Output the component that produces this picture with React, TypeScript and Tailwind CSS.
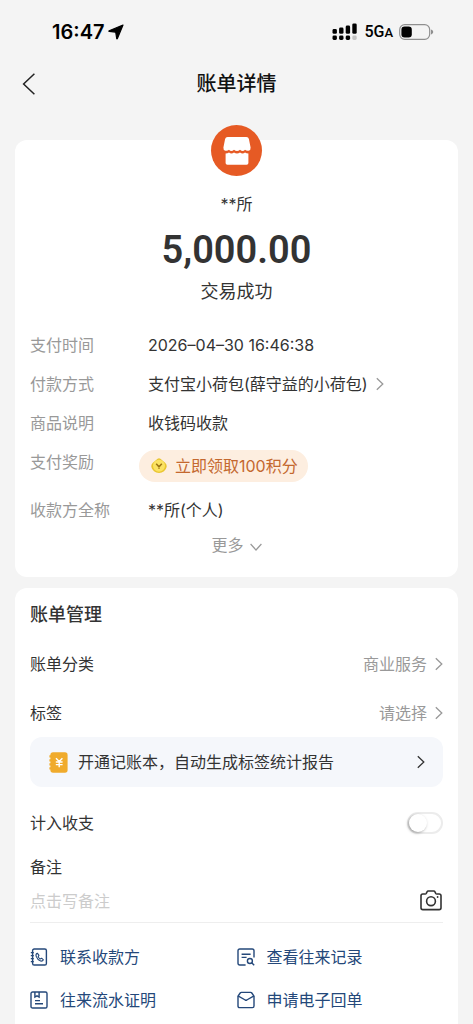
import { useState } from 'react';
import clsx from 'clsx';

interface IconProps {
  className?: string;
}

function ChevronRight({ className }: IconProps) {
  return (
    <svg viewBox="0 0 8 14" fill="none" stroke="currentColor" className={clsx('h-3.5 w-2 shrink-0', className)} aria-hidden="true">
      <path d="M0.8 1.2L6.8 7L0.8 12.8" strokeWidth="1.3" />
    </svg>
  );
}

function SignalIcon() {
  return (
    <svg viewBox="0 0 26 18" fill="currentColor" className="h-[18px] w-[26px]" aria-hidden="true">
      <rect x="0.5" y="6" width="4.4" height="4.8" rx="1.4" />
      <rect x="7.1" y="4.5" width="4.4" height="6.3" rx="1.4" />
      <rect x="13.7" y="2.6" width="4.4" height="8.2" rx="1.4" />
      <rect x="20.3" y="0.4" width="4.4" height="10.4" rx="1.4" />
      <rect x="0.5" y="12.6" width="4.4" height="4.4" rx="1.4" />
      <rect x="7.1" y="12.6" width="4.4" height="4.4" rx="1.4" />
      <rect x="13.7" y="12.6" width="4.4" height="4.4" rx="1.4" />
      <rect x="20.3" y="12.6" width="4.4" height="4.4" rx="1.4" opacity="0.2" />
    </svg>
  );
}

function BatteryIcon() {
  return (
    <svg viewBox="0 0 35 16" className="h-4 w-[35px]" aria-hidden="true">
      <rect x="0.7" y="0.7" width="30" height="14.6" rx="5" fill="none" stroke="#8f8f8f" strokeWidth="1.2" />
      <rect x="2.4" y="2.6" width="10.4" height="10.8" rx="3.2" fill="#000" />
      <path d="M32 5.6C33.6 6.2 34.2 7 34.2 8S33.6 9.8 32 10.4Z" fill="#8f8f8f" />
    </svg>
  );
}

function LocationIcon() {
  return (
    <svg viewBox="0 0 16 16" fill="currentColor" stroke="currentColor" strokeWidth="1.2" strokeLinejoin="round" className="size-4" aria-hidden="true">
      <path d="M15 1L9.4 14.6Q9 15.4 8.7 14.5L7.8 8.6Q7.7 8.2 7.3 8.1L1.3 7.4Q0.4 7.1 1.2 6.7Z" />
    </svg>
  );
}

function ShopIcon() {
  return (
    <svg viewBox="0 0 28 28" className="size-7" fill="#fff" aria-hidden="true">
      <path d="M4.6 0H23.4Q25.4 0 25.9 2L27.6 10.5Q27.9 13.2 25.6 13.7Q23.4 14 22 12.8Q19.8 15.2 17 12.8Q14 15.2 11 12.8Q8.2 15.2 6 12.8Q4.6 14 2.4 13.7Q0.1 13.2 0.4 10.5L2.1 2Q2.6 0 4.6 0Z" />
      <path d="M2.6 16.4Q4.6 16.4 6 15.4Q8.4 17.6 11 15.4Q14 17.6 17 15.4Q19.6 17.6 22 15.4Q23.4 16.4 25.4 16.4V26Q25.4 27.8 23.6 27.8H4.4Q2.6 27.8 2.6 26Z" />
    </svg>
  );
}

function CoinIcon() {
  return (
    <svg viewBox="0 0 16 16" className="size-4" aria-hidden="true">
      <path d="M6.6 0.8Q8 -0.2 9.4 0.8L14.4 5Q16 6.6 15.6 9A7.7 7 0 0 1 0.4 9Q0 6.6 1.6 5Z" fill="#e9c52f" />
      <circle cx="8" cy="7.8" r="6" fill="#fbe262" />
      <path d="M5.2 5.8L8 8.8L10.8 5.8M8 8.4V10.8" fill="none" stroke="#9c7412" strokeWidth="1.5" />
    </svg>
  );
}

function LedgerIcon() {
  return (
    <svg viewBox="0 0 19 21" className="h-[21px] w-[19px]" aria-hidden="true">
      <rect x="1.4" y="0.3" width="17.2" height="20.4" rx="2.6" fill="#f0ab2c" />
      <path d="M0.4 4.4h3M0.4 8.4h3M0.4 12.4h3M0.4 16.4h3" stroke="#f0ab2c" strokeWidth="2.4" />
      <path d="M7 6.2L10.2 9.6L13.4 6.2M10.2 9.6V15.2M6.8 10h6.8M6.8 12.6h6.8" fill="none" stroke="#fff" strokeWidth="1.4" />
    </svg>
  );
}

function CameraIcon() {
  return (
    <svg viewBox="0 0 22 21" fill="none" stroke="currentColor" strokeWidth="1.6" className="h-[21px] w-[22px]" aria-hidden="true">
      <path d="M2.8 4H5.2Q5.9 4 6.3 3.3L7 1.9Q7.4 1 8.3 1H13.7Q14.6 1 15 1.9L15.7 3.3Q16.1 4 16.8 4H19.2Q21 4 21 5.8V17.8Q21 19.6 19.2 19.6H2.8Q1 19.6 1 17.8V5.8Q1 4 2.8 4Z" />
      <circle cx="11" cy="11.2" r="4.4" />
      <circle cx="17.6" cy="7" r="0.9" fill="currentColor" stroke="none" />
    </svg>
  );
}

function ContactIcon() {
  return (
    <svg viewBox="0 0 18 18" fill="none" stroke="currentColor" strokeWidth="1.4" className="size-[18px]" aria-hidden="true">
      <rect x="2.6" y="1" width="13.8" height="16" rx="1.6" />
      <path d="M0.8 4.6h3M0.8 7.6h3M0.8 10.6h3M0.8 13.6h3" strokeWidth="1.2" />
      <path d="M7.3 5.2Q5.4 6 6.2 8.4Q7.4 11.8 10.6 13Q12.6 13.4 13.4 11.8L11.6 10.2L10.2 10.9Q8.8 10.2 8.2 8.6L9 7.3Z" strokeWidth="1.1" strokeLinejoin="round" />
    </svg>
  );
}

function RecordIcon() {
  return (
    <svg viewBox="0 0 18 18" fill="none" stroke="currentColor" strokeWidth="1.4" className="size-[18px]" aria-hidden="true">
      <path d="M8.6 17H2.8Q1 17 1 15.2V2.8Q1 1 2.8 1H15.2Q17 1 17 2.8V9.4" />
      <path d="M4.6 6.2h9M4.6 9.4h5" />
      <circle cx="12.9" cy="13" r="2.5" />
      <path d="M14.7 14.8L17.2 17.2" />
    </svg>
  );
}

function StatementIcon() {
  return (
    <svg viewBox="0 0 18 18" fill="none" stroke="currentColor" strokeWidth="1.4" className="size-[18px]" aria-hidden="true">
      <rect x="1" y="1" width="16" height="16" rx="1.6" />
      <path d="M4.9 1V6L7 4.8L9.1 6V1" />
      <path d="M5 9.6h5M5 12.8h8" />
    </svg>
  );
}

function ReceiptIcon() {
  return (
    <svg viewBox="0 0 18 18" fill="none" stroke="currentColor" strokeWidth="1.4" className="size-[18px]" aria-hidden="true">
      <path d="M1 5.2L3.2 2Q3.6 1.4 4.4 1.4H13.6Q14.4 1.4 14.8 2L17 5.2V15Q17 16.6 15.4 16.6H2.6Q1 16.6 1 15Z" />
      <path d="M1 4.8L8.2 9Q9 9.4 9.8 9L17 4.8" />
    </svg>
  );
}

const LINKS = [
  { label: '联系收款方', Icon: ContactIcon },
  { label: '查看往来记录', Icon: RecordIcon },
  { label: '往来流水证明', Icon: StatementIcon },
  { label: '申请电子回单', Icon: ReceiptIcon },
];

const SETTINGS = [
  { label: '账单分类', value: '商业服务' },
  { label: '标签', value: '请选择' },
];

interface DetailRowProps {
  label: string;
  children: React.ReactNode;
}

function DetailRow({ label, children }: DetailRowProps) {
  return (
    <div className="flex h-[39px] items-center">
      <dt className="w-[118px] shrink-0 text-[#999]">{label}</dt>
      <dd>{children}</dd>
    </div>
  );
}

function StatusBar() {
  return (
    <div className="flex h-16 items-center justify-between pr-[39px] pl-[52px] text-black">
      <div className="flex items-center gap-1">
        <span className="text-xl font-semibold">16:47</span>
        <LocationIcon />
      </div>
      <div className="flex items-center gap-1.5">
        <SignalIcon />
        <span className="font-[Roboto] text-base font-medium">
          5G<span className="text-[13px]">A</span>
        </span>
        <BatteryIcon />
      </div>
    </div>
  );
}

export default function App() {
  const [counted, setCounted] = useState(false);
  const [note, setNote] = useState('');

  return (
    <div className="flex min-h-screen flex-col bg-[#f4f4f4] font-[Inter,'Noto_Sans_CJK_SC',sans-serif] text-base leading-6 text-[#333]">
      <StatusBar />

      <header className="grid h-10 grid-cols-3 items-center px-[22px]">
        <button type="button" aria-label="返回" className="w-6">
          <svg viewBox="0 0 14 22" fill="none" stroke="#222" strokeWidth="1.5" className="h-[22px] w-3.5" aria-hidden="true">
            <path d="M12.4 0.8L1.6 11L12.4 21.2" />
          </svg>
        </button>
        <h1 className="text-center text-xl font-medium text-[#111]">账单详情</h1>
      </header>

      <main className="mt-9 flex flex-1 flex-col gap-[11px] px-[15px]">
        <section className="rounded-xl bg-white px-[15px] pb-4">
          <div className="flex flex-col items-center">
            <div className="-mt-[15px] flex size-[51px] items-center justify-center rounded-full bg-[#e65a24]">
              <ShopIcon />
            </div>
            <p className="mt-4">**所</p>
            <p className="mt-3 font-[Roboto] text-[38px] leading-[44px] font-semibold">5,000.00</p>
            <p className="mt-2 text-lg leading-6">交易成功</p>
          </div>

          <dl className="mt-[21px]">
            <DetailRow label="支付时间">2026–04–30 16:46:38</DetailRow>
            <DetailRow label="付款方式">
              <button type="button" className="flex items-center gap-2">
                支付宝小荷包(薛守益的小荷包)
                <ChevronRight className="text-[#999]" />
              </button>
            </DetailRow>
            <DetailRow label="商品说明">收钱码收款</DetailRow>
            <div className="flex h-12 pt-2">
              <dt className="w-[109px] shrink-0 text-[#999]">支付奖励</dt>
              <dd>
                <button type="button" className="flex h-8 items-center gap-2 rounded-full bg-[#fdeee0] pr-2.5 pl-3 text-[#c4682f]">
                  <CoinIcon />
                  立即领取100积分
                </button>
              </dd>
            </div>
            <DetailRow label="收款方全称">**所(个人)</DetailRow>
          </dl>

          <button type="button" className="mx-auto flex h-8 items-center gap-1.5 text-[#999]">
            更多
            <svg viewBox="0 0 12 8" fill="none" stroke="currentColor" strokeWidth="1.2" className="mt-1 h-2 w-3" aria-hidden="true">
              <path d="M0.6 1L6 7L11.4 1" />
            </svg>
          </button>
        </section>

        <section className="flex-1 rounded-t-xl bg-white px-[15px] pt-[15px]">
          <h2 className="mb-3 text-lg leading-6 font-medium">账单管理</h2>

          {SETTINGS.map(({ label, value }) => (
            <button key={label} type="button" className="flex h-[49px] w-full items-center justify-between">
              <span>{label}</span>
              <span className="flex items-center gap-2 text-[#999]">
                {value}
                <ChevronRight />
              </span>
            </button>
          ))}

          <button type="button" className="flex h-[50px] w-full items-center gap-2.5 rounded-xl bg-[#f5f7fb] pr-[18px] pl-[19px]">
            <LedgerIcon />
            <span>开通记账本，自动生成标签统计报告</span>
            <ChevronRight className="ml-auto" />
          </button>

          <div className="mt-3 flex h-12 items-center justify-between">
            <label htmlFor="counted">计入收支</label>
            <input
              id="counted"
              type="checkbox"
              role="switch"
              checked={counted}
              onChange={e => setCounted(e.target.checked)}
              className="h-[22px] w-9 appearance-none rounded-full border-2 border-[#ececec] bg-white before:block before:size-[18px] before:rounded-full before:bg-white before:shadow-[-1px_1px_3px_rgba(0,0,0,0.35)] checked:bg-[#1677ff] checked:before:translate-x-3.5"
            />
          </div>

          <label htmlFor="note" className="mt-2 block">备注</label>
          <div className="flex h-11 items-center border-b border-[#eee]">
            <input
              id="note"
              type="text"
              value={note}
              onChange={e => setNote(e.target.value)}
              placeholder="点击写备注"
              className="min-w-0 flex-1 outline-none placeholder:text-[#ccc]"
            />
            <button type="button" aria-label="添加图片" className="pr-px">
              <CameraIcon />
            </button>
          </div>

          <nav className="mt-3 grid grid-cols-2 text-[#24487a]">
            {LINKS.map(({ label, Icon }) => (
              <a key={label} href="#" className="flex h-[43px] items-center gap-3">
                <Icon />
                {label}
              </a>
            ))}
          </nav>
        </section>
      </main>
    </div>
  );
}
